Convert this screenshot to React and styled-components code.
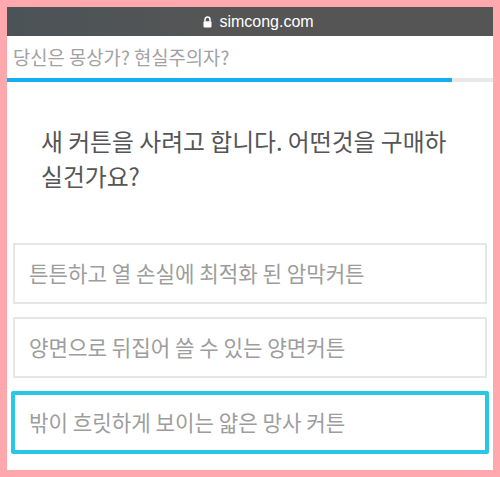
import React, { useState } from 'react'
import styled, { createGlobalStyle } from 'styled-components'

const GlobalStyle = createGlobalStyle`
    html, body {
        margin: 0;
        padding: 0;
        background: #ffa9ae;
    }
    * {
        box-sizing: border-box;
    }
`

const Frame = styled.div`
    width: 500px;
    height: 477px;
    padding: 7px;
    background-color: #ffa9ae;
`

const Screen = styled.div`
    height: 100%;
    display: flex;
    flex-direction: column;
    background-color: #fff;
    overflow: hidden;
`

const AddressBar = styled.div`
    height: 29px;
    display: flex;
    align-items: center;
    justify-content: center;
    gap: 7px;
    padding-left: 17px;
    background: linear-gradient(to right, #4b5357, #555 45%, #555);
    color: #fff;
    font-family: "Liberation Sans", Arial, sans-serif;
    font-size: 16px;
`

const QuizTitle = styled.div`
    height: 42px;
    display: flex;
    align-items: center;
    padding-left: 6px;
    padding-bottom: 2px;
    font-family: "Noto Sans CJK KR", sans-serif;
    font-size: 18.8px;
    color: #a2a2a2;
`

const Track = styled.div`
    height: 4px;
    background-color: #e8e8e8;
`

const Fill = styled.div`
    height: 100%;
    background-color: #17adf3;
`

const Question = styled.h2`
    margin: 41px 0 0;
    padding: 0 34px;
    font-family: "Noto Sans CJK KR", sans-serif;
    font-weight: 400;
    font-size: 23.8px;
    line-height: 35px;
    color: #555;
    word-break: keep-all;
`

const Options = styled.div`
    display: flex;
    flex-direction: column;
    gap: 13px;
    margin-top: 50px;
    padding: 0 6px;
`

const Option = styled.div`
    height: ${p => (p.selected ? '63px' : '61px')};
    margin: ${p => (p.selected ? '0 -2px' : '0')};
    display: flex;
    align-items: center;
    padding: 0 14px 2px;
    border: ${p => (p.selected ? '4px solid #2ac6e6' : '2px solid #e6e6e6')};
    border-radius: ${p => (p.selected ? '2px' : '0')};
    font-family: "Noto Sans CJK KR", sans-serif;
    font-size: 21.2px;
    color: #9d9d9d;
    white-space: nowrap;
    cursor: pointer;
`

const LockIcon = () => (
    <svg width="9" height="12" viewBox="0 0 9 12">
        <path d="M2 5.5V3.6a2.5 2.5 0 0 1 5 0v1.9" fill="none" stroke="#fff" strokeWidth="1.5" />
        <rect x="0.5" y="5.2" width="8" height="6.3" rx="1" fill="#fff" />
    </svg>
)

const answers = [
    '튼튼하고 열 손실에 최적화 된 암막커튼',
    '양면으로 뒤집어 쓸 수 있는 양면커튼',
    '밖이 흐릿하게 보이는 얇은 망사 커튼',
]

const App = () => {
    const [picked, setPicked] = useState(2)
    const progress = 91.6

    return (
        <Frame>
            <GlobalStyle />
            <Screen>
                <AddressBar>
                    <LockIcon />
                    <span>simcong.com</span>
                </AddressBar>
                <QuizTitle>당신은 몽상가? 현실주의자?</QuizTitle>
                <Track>
                    <Fill style={{ width: progress + '%' }} />
                </Track>
                <Question>새 커튼을 사려고 합니다. 어떤것을 구매하 실건가요?</Question>
                <Options>
                    {answers.map((text, i) => (
                        <Option key={i} selected={picked === i} onClick={() => setPicked(i)}>
                            {text}
                        </Option>
                    ))}
                </Options>
            </Screen>
        </Frame>
    )
}

export default App
